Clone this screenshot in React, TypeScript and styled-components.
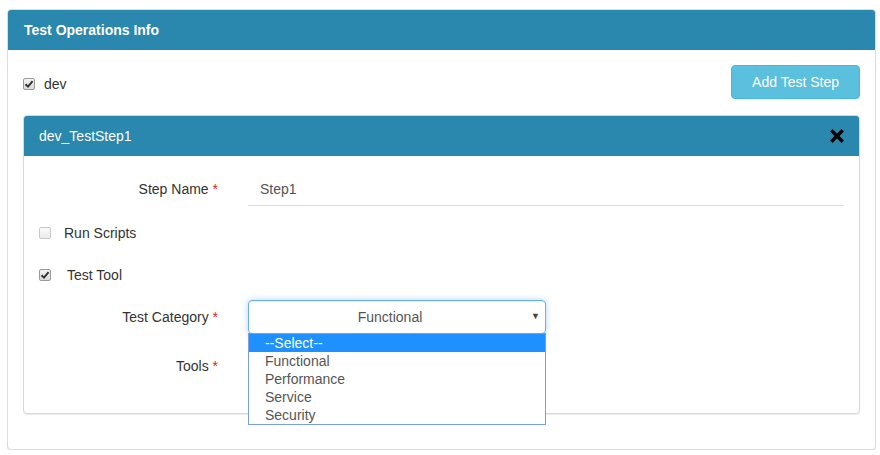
import React from "react";
import styled, { createGlobalStyle } from "styled-components";

const Global = createGlobalStyle`
  html, body { margin: 0; padding: 0; background: #fff; }
  body { font-family: "Liberation Sans", Arial, sans-serif; font-size: 14px; color: #333; }
  * { box-sizing: border-box; }
`;

const Page = styled.div`
  padding: 9px 4px 0 7px;
`;

const Panel = styled.div<{ $inner?: boolean }>`
  border: 1px solid ${(p) => (p.$inner ? "#d8d8d8" : "#ddd")};
  border-radius: 4px;
  background: #fff;
  box-shadow: 0 1px 1px rgba(0, 0, 0, 0.08);
  margin-bottom: ${(p) => (p.$inner ? "20px" : "0")};
`;

const Heading = styled.div<{ $bold?: boolean }>`
  height: 40px;
  background: #2a87ae;
  color: #fff;
  border-radius: 3px 3px 0 0;
  display: flex;
  align-items: center;
  justify-content: space-between;
  padding: 0 15px 0 ${(p) => (p.$bold ? "16px" : "15px")};
  font-weight: ${(p) => (p.$bold ? 700 : 400)};
  font-size: 14px;
`;

const Body = styled.div<{ $top?: number }>`
  padding: ${(p) => p.$top ?? 15}px 15px 15px 15px;
`;

const TopRow = styled.div`
  display: flex;
  align-items: center;
  justify-content: space-between;
  margin-bottom: 16px;
`;

const CheckLabel = styled.label<{ $gap?: number; $dy?: number }>`
  display: flex;
  align-items: center;
  gap: ${(p) => p.$gap ?? 8}px;
  font-size: 14px;
  color: #333;
  padding-top: ${(p) => p.$dy ?? 0}px;
`;

const Box = styled.span<{ $checked?: boolean }>`
  width: 12px;
  height: 12px;
  border-radius: 2px;
  border: 1px solid ${(p) => (p.$checked ? "#9a9a9a" : "#c8c8c8")};
  background: ${(p) => (p.$checked ? "linear-gradient(#f2f2f2, #dcdcdc)" : "linear-gradient(#fafafa, #ececec)")};
  display: inline-flex;
  align-items: center;
  justify-content: center;
  flex: none;
`;

const Button = styled.button`
  height: 34px;
  padding: 0 20px;
  background: #5bc0de;
  border: 1px solid #46b8da;
  border-radius: 4px;
  color: #fff;
  font-family: "Liberation Sans", Arial, sans-serif;
  font-size: 14px;
`;

const FormRow = styled.div<{ $mb?: number }>`
  display: grid;
  grid-template-columns: 179px 1fr;
  column-gap: 30px;
  align-items: center;
  height: 34px;
  margin-bottom: ${(p) => p.$mb ?? 15}px;
  position: relative;
`;

const Label = styled.div`
  text-align: right;
  color: #333;
  font-size: 14px;
`;

const Star = styled.span`
  color: #e02020;
`;

const CheckRow = styled.div<{ $mb: number }>`
  height: 24px;
  margin-bottom: ${(p) => p.$mb}px;
  display: flex;
  align-items: center;
`;

const TextInput = styled.div`
  height: 34px;
  border-bottom: 1px solid #e0e0e0;
  display: flex;
  align-items: center;
  padding-left: 12px;
  color: #555;
`;

const SelectCol = styled.div`
  position: relative;
  height: 34px;
`;

const SelectBox = styled.div`
  width: 298px;
  height: 34px;
  padding-right: 14px;
  border: 1px solid #66afe9;
  border-radius: 4px;
  box-shadow: inset 0 1px 1px rgba(0, 0, 0, 0.075), 0 0 6px rgba(102, 175, 233, 0.5);
  display: flex;
  align-items: center;
  justify-content: center;
  color: #555;
  position: relative;
`;

const Arrow = styled.span`
  position: absolute;
  right: 5px;
  top: 10px;
  font-size: 9px;
  color: #444;
`;

const Dropdown = styled.ul`
  position: absolute;
  left: 0;
  top: 33px;
  width: 298px;
  margin: 0;
  padding: 0;
  list-style: none;
  background: #fff;
  border: 1px solid #7b9fdc;
  z-index: 5;
`;

const Option = styled.li<{ $active?: boolean }>`
  height: 18px;
  line-height: 18px;
  padding-left: 16px;
  font-size: 14px;
  color: ${(p) => (p.$active ? "#fff" : "#555")};
  background: ${(p) => (p.$active ? "#1e90ff" : "transparent")};
`;

const Check = () => (
  <svg width="10" height="10" viewBox="0 0 10 10">
    <path d="M1.5 5.2 L4 7.6 L8.6 2.2" fill="none" stroke="#333" strokeWidth="2" />
  </svg>
);

const CloseIcon = () => (
  <svg width="14" height="14" viewBox="0 0 14 14">
    <path d="M2.5 2.5 L11.5 11.5 M11.5 2.5 L2.5 11.5" stroke="#000" strokeWidth="3.4" strokeLinecap="square" />
  </svg>
);

export default function App() {
  const options = ["--Select--", "Functional", "Performance", "Service", "Security"];
  return (
    <>
      <Global />
      <Page>
        <Panel>
          <Heading $bold>Test Operations Info</Heading>
          <Body>
            <TopRow>
              <CheckLabel $gap={9} $dy={3}>
                <Box $checked>
                  <Check />
                </Box>
                dev
              </CheckLabel>
              <Button>Add Test Step</Button>
            </TopRow>
            <Panel $inner>
              <Heading>
                dev_TestStep1
                <CloseIcon />
              </Heading>
              <Body $top={16}>
                <FormRow>
                  <Label>
                    Step Name <Star>*</Star>
                  </Label>
                  <TextInput>Step1</TextInput>
                </FormRow>
                <CheckRow $mb={18}>
                  <CheckLabel $gap={13}>
                    <Box />
                    Run Scripts
                  </CheckLabel>
                </CheckRow>
                <CheckRow $mb={13}>
                  <CheckLabel $gap={16}>
                    <Box $checked>
                      <Check />
                    </Box>
                    Test Tool
                  </CheckLabel>
                </CheckRow>
                <FormRow>
                  <Label>
                    Test Category <Star>*</Star>
                  </Label>
                  <SelectCol>
                    <SelectBox>
                      Functional
                      <Arrow>▼</Arrow>
                    </SelectBox>
                    <Dropdown>
                      {options.map((o, i) => (
                        <Option key={o} $active={i === 0}>
                          {o}
                        </Option>
                      ))}
                    </Dropdown>
                  </SelectCol>
                </FormRow>
                <FormRow $mb={15}>
                  <Label>
                    Tools <Star>*</Star>
                  </Label>
                  <div />
                </FormRow>
              </Body>
            </Panel>
          </Body>
        </Panel>
      </Page>
    </>
  );
}
